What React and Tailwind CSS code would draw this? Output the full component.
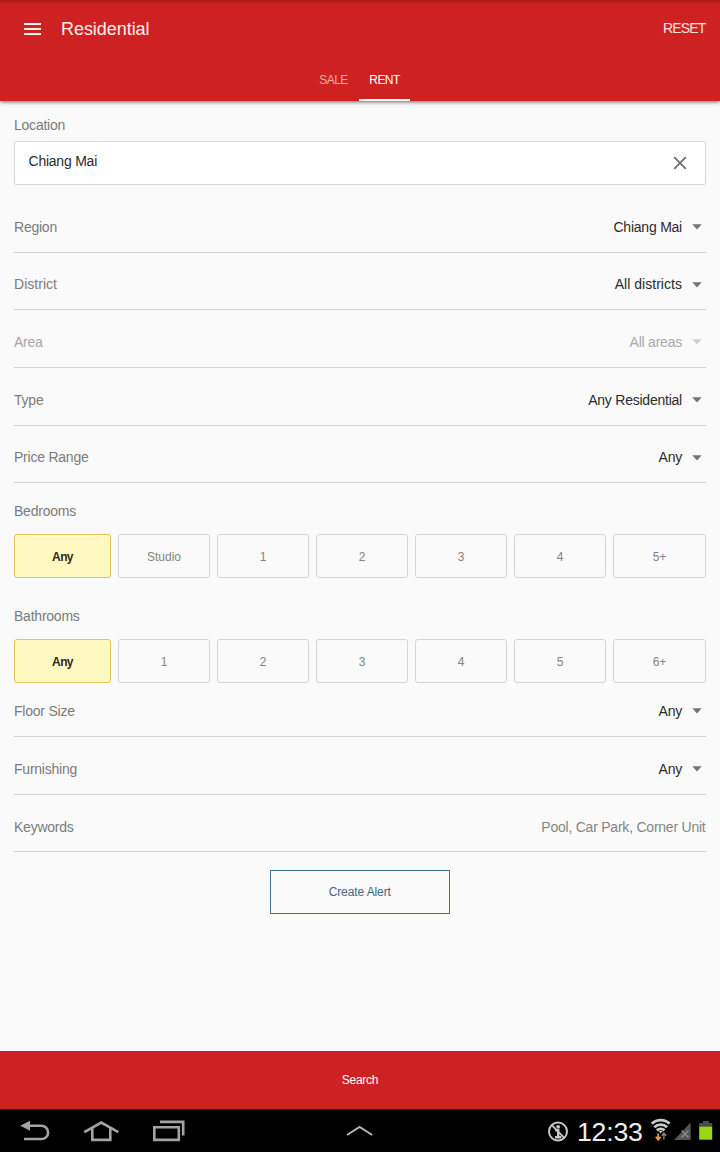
import React, { useState } from "react";

const topFilters = [
  { label: "Region", value: "Chiang Mai" },
  { label: "District", value: "All districts", wide: true },
  { label: "Area", value: "All areas", disabled: true },
  { label: "Type", value: "Any Residential" },
  { label: "Price Range", value: "Any" },
];

const bottomFilters = [
  { label: "Floor Size", value: "Any" },
  { label: "Furnishing", value: "Any" },
];

const bedroomOptions = ["Any", "Studio", "1", "2", "3", "4", "5+"];
const bathroomOptions = ["Any", "1", "2", "3", "4", "5", "6+"];

const FilterRow = ({ label, value, disabled, wide }) => (
  <button
    disabled={disabled}
    className={`flex w-full h-[57.7px] items-center justify-between border-b border-[#d3d3d3] pt-[7.5px] ${
      wide ? "tracking-[0.03px]" : ""
    }`}
  >
    <span className={disabled ? "text-[#a6a6a6]" : "text-[#7c7c7c]"}>{label}</span>
    <span className="flex items-center gap-[9.5px] pr-1">
      <span className={disabled ? "text-[#a9a9a9]" : "text-[#2b2b2b]"}>{value}</span>
      <svg
        width="10"
        height="6"
        viewBox="0 0 10 6"
        className={disabled ? "fill-[#cfcfcf]" : "fill-[#747474]"}
      >
        <path d="M0.3 0.3h9.4L5 5.5z" />
      </svg>
    </span>
  </button>
);

const OptionGroup = ({ label, options }) => {
  const [selected, setSelected] = useState("Any");

  return (
    <div>
      <p className="text-[#7c7c7c] leading-5">{label}</p>
      <div className="mt-[13px] grid grid-cols-[97px_repeat(5,92px)_93px] gap-[7px]">
        {options.map((option) => (
          <button
            key={option}
            onClick={() => setSelected(option)}
            className={`h-11 rounded-[3px] border pt-[2px] text-[12px] ${
              selected === option
                ? "border-[#e3c55c] bg-[#fff8c0] font-bold tracking-[-0.6px] text-[#2d2a18]"
                : "border-[#d4d4d4] tracking-normal text-[#848484]"
            }`}
          >
            {option}
          </button>
        ))}
      </div>
    </div>
  );
};

/* ── System bar ── */
const SystemBar = () => (
  <div className="flex h-[43px] items-center border-t border-[#35151f] bg-black">
    <svg width="240" height="42" viewBox="0 0 240 42" fill="none" stroke="#a3a3a3" strokeWidth="2.6">
      <path d="M28 15.8h13.5a6.6 6.6 0 0 1 0 13.2H24" />
      <path d="M20.3 15.8l9.7-5v10z" fill="#a3a3a3" stroke="none" />
      <path d="M84.3 22.2l17-9.7 17 9.7M92.3 18.6v11.3h18V18.6" />
      <path d="M154.3 17.2h24.5v12.7h-24.5zM160 11.9h23.2v13.5" />
    </svg>
    <svg width="307" height="42" viewBox="0 0 307 42" fill="none" stroke="#b5b5b5" strokeWidth="2">
      <path d="M107 25l12.6-8 12.6 8" />
    </svg>
    <div className="flex flex-1 items-center">
      <svg width="22" height="24" viewBox="0 0 22 24" className="mt-[2px]" fill="none" stroke="#c6c6c6">
        <circle cx="11" cy="11.5" r="9" strokeWidth="2" />
        <circle cx="11.2" cy="6.8" r="1.9" fill="#c6c6c6" stroke="none" />
        <path d="M8.2 10.3h3v7.2M8 17.2h6.4" strokeWidth="2.4" />
        <path d="M4.7 5.2l12.6 12.6" strokeWidth="1.9" />
      </svg>
      <span className="ml-[8px] mt-[3px] w-[66px] text-[26.7px] leading-none text-[#eeeeee]">12:33</span>
      <svg width="77" height="42" viewBox="0 0 77 42" fill="none">
        <g stroke="#c9c9c9" strokeWidth="2.9">
          <path d="M8.8 13.6a13 13 0 0 1 17.8 0" />
          <path d="M11.3 17.2a9.2 9.2 0 0 1 12.8 0" />
          <path d="M13.9 20.4a5.6 5.6 0 0 1 7.6 0" />
        </g>
        <path d="M15.7 21h4l-2 2.4z" fill="#c9c9c9" />
        <path d="M15.2 23.6v6.4M12.8 26.8l2.4 3 2.4-3" stroke="#e99b3c" strokeWidth="1.8" />
        <path d="M20.9 29.5v-6M18.7 25.8l2.2-2.7 2.2 2.7" stroke="#858585" strokeWidth="1.4" />
        <path d="M31 30L47.7 12.5V30z" fill="#555555" />
        <path d="M38.5 20.5l7 7M45.5 20.5l-7 7" stroke="#8d8d8d" strokeWidth="1.3" />
        <path d="M60 11h6v2h3.2v3.5H56.2V13H60z" fill="#4c4c4c" />
        <path d="M56.2 16.5h13v13.2h-13z" fill="#9bd516" />
      </svg>
    </div>
  </div>
);

const App = () => {
  const [tab, setTab] = useState("RENT");
  const [location, setLocation] = useState("Chiang Mai");

  return (
    <div className="flex h-[1152px] w-[720px] flex-col overflow-hidden bg-[#fafafa] font-['Liberation_Sans',Arial,sans-serif] text-[14px] tracking-[-0.23px]">
      {/* ── Header ── */}
      <header className="relative flex h-[101px] shrink-0 flex-col bg-[#cd2221] bg-linear-to-b from-[#a81818] to-[#cd2221] to-[4px] text-white shadow-[0_1px_4px_rgba(0,0,0,0.6)]">
        <div className="flex h-[58px] items-center pl-6 pr-[14.5px]">
          <button aria-label="Menu" className="flex w-[17px] flex-col gap-[3px]">
            <span className="h-[2px] w-full bg-[#fff0ee]" />
            <span className="h-[2px] w-full bg-[#fff0ee]" />
            <span className="h-[2px] w-full bg-[#fff0ee]" />
          </button>
          <h1 className="ml-5 flex-1 text-[18px] tracking-[-0.05px] text-[#ffefed]">Residential</h1>
          <button className="pb-px text-[14px] tracking-[-0.85px] text-[#ffe3e0]">RESET</button>
        </div>
        <nav className="flex flex-1 justify-center pr-[3px]">
          {["SALE", "RENT"].map((name) => (
            <button
              key={name}
              onClick={() => setTab(name)}
              className={`w-[51px] border-b-2 pl-px pt-[2px] text-[12px] tracking-[-0.6px] ${
                tab === name ? "border-white text-white" : "border-transparent text-[#f3a8a4]"
              }`}
            >
              {name}
            </button>
          ))}
        </nav>
      </header>

      <main className="flex-1 px-[14px] pr-[14.5px] pt-[14px]">
        <p className="leading-5 text-[#7c7c7c]">Location</p>
        <div className="mt-[6px] flex h-11 items-center justify-between rounded-[2px] border border-[#d8d8d8] bg-white pl-[13.5px] pr-[18px]">
          <input
            value={location}
            onChange={(e) => setLocation(e.target.value)}
            className="mb-[3px] flex-1 text-[#2b2b2b] outline-none"
          />
          <button aria-label="Clear" onClick={() => setLocation("")}>
            <svg width="14" height="14" viewBox="0 0 14 14" stroke="#6f6f6f" strokeWidth="1.8">
              <path d="M1.2 1.2l11.6 11.6M12.8 1.2L1.2 12.8" />
            </svg>
          </button>
        </div>

        <div className="mt-[10px]">
          {topFilters.map((filter) => (
            <FilterRow key={filter.label} {...filter} />
          ))}
        </div>

        <div className="mt-[17.5px] flex flex-col gap-7">
          <OptionGroup label="Bedrooms" options={bedroomOptions} />
          <OptionGroup label="Bathrooms" options={bathroomOptions} />
        </div>

        <div className="-mt-[3.7px]">
          {bottomFilters.map((filter) => (
            <FilterRow key={filter.label} {...filter} />
          ))}
          <label className="flex h-[57px] items-center justify-between border-b border-[#d3d3d3] pt-[10px] text-[#7c7c7c]">
            Keywords
            <input
              placeholder="Pool, Car Park, Corner Unit"
              className="w-[300px] text-right outline-none placeholder:text-[#858585]"
            />
          </label>
        </div>

        <button className="mx-auto mt-[18.7px] block h-11 w-[180px] border border-[#466f8d] text-[12px] tracking-[-0.1px] text-[#42677f]">
          Create Alert
        </button>
      </main>

      <button className="h-[58px] shrink-0 bg-[#cd2221] text-[12px] text-white">Search</button>
      <SystemBar />
    </div>
  );
};

export default App;
